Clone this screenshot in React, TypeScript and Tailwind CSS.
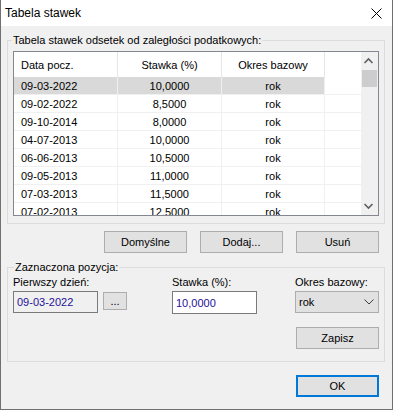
const rows = [
	['09-03-2022', '10,0000'],
	['09-02-2022', '8,5000'],
	['09-10-2014', '8,0000'],
	['04-07-2013', '10,0000'],
	['06-06-2013', '10,5000'],
	['09-05-2013', '11,0000'],
	['07-03-2013', '11,5000'],
	['07-02-2013', '12,5000'],
];

const Button = ({ label, className = '' }: { label: string; className?: string }) => {
	return (
		<div
			className={`w-[83px] h-[22px] flex items-center justify-center border border-[#adadad] bg-[#e1e1e1] ${className}`}
		>
			{label}
		</div>
	);
};

const App = () => {
	return (
		<div className="w-[393px] h-[410px] flex flex-col border-x border-b border-[#707070] bg-[#f0f0f0] font-['Liberation_Sans',Arial,sans-serif] text-[11px] text-black leading-[14px]">
			{/* pasek tytułu */}
			<div className="h-[26px] shrink-0 bg-white flex items-center justify-between pl-[4px] pr-[10px]">
				<div className="text-[12px]">Tabela stawek</div>
				<svg width="11" height="11" viewBox="0 0 11 11">
					<path d="M0.5 0.5 L10.5 10.5 M10.5 0.5 L0.5 10.5" stroke="#000" strokeWidth="1" fill="none" />
				</svg>
			</div>

			{/* tabela */}
			<div className="relative ml-[6px] mt-[14px] w-[378px] h-[184px] border border-[#dcdcdc]">
				<div className="absolute left-[4px] -top-[8px] px-[1px] bg-[#f0f0f0]">
					Tabela stawek odsetek od zaległości podatkowych:
				</div>
				<div className="ml-[5px] mt-[10px] w-[366px] h-[165px] border border-[#828790] bg-white flex overflow-hidden">
					<div className="w-[347px] flex flex-col">
						<div className="h-[25px] shrink-0 flex">
							<div className="w-[104px] border-r border-[#e5e5e5] pl-[7px] flex items-center">Data pocz.</div>
							<div className="w-[104px] border-r border-[#e5e5e5] flex items-center justify-center">
								Stawka (%)
							</div>
							<div className="w-[103px] border-r border-[#e5e5e5] flex items-center justify-center">
								Okres bazowy
							</div>
						</div>
						{rows.map(([date, rate], i) => (
							<div key={date} className="h-[18px] shrink-0 flex border-b border-[#f0f0f0]">
								<div className={`w-[311px] flex ${i === 0 ? 'bg-[#d9d9d9]' : ''}`}>
									<div className="w-[104px] border-r border-[#f0f0f0] pl-[7px] flex items-center">{date}</div>
									<div className="w-[104px] border-r border-[#f0f0f0] flex items-center justify-center">
										{rate}
									</div>
									<div className="w-[103px] border-r border-[#f0f0f0] flex items-center justify-center">
										rok
									</div>
								</div>
							</div>
						))}
					</div>
					<div className="w-[17px] bg-[#f0f0f0] flex flex-col">
						<div className="h-[17px] shrink-0">
							<svg width="17" height="17" viewBox="0 0 17 17">
								<polyline points="3.5,11 7.5,7 11.5,11" stroke="#606060" strokeWidth="1.6" fill="none" />
							</svg>
						</div>
						<div className="mt-[1px] ml-[1px] w-[15px] h-[17px] bg-[#cdcdcd]"></div>
						<div className="flex-1"></div>
						<div className="h-[17px] shrink-0">
							<svg width="17" height="17" viewBox="0 0 17 17">
								<polyline points="3.5,6 7.5,10 11.5,6" stroke="#606060" strokeWidth="1.6" fill="none" />
							</svg>
						</div>
					</div>
				</div>
			</div>

			{/* przyciski tabeli */}
			<div className="mt-[7px] flex justify-end gap-[13px] pr-[13px]">
				<Button label="Domyślne" />
				<Button label="Dodaj..." />
				<Button label="Usuń" />
			</div>

			{/* zaznaczona pozycja */}
			<div className="relative ml-[6px] mt-[14px] w-[378px] h-[95px] border border-[#dcdcdc] flex items-start pt-[7px]">
				<div className="absolute left-[6px] -top-[8px] px-[1px] bg-[#f0f0f0]">Zaznaczona pozycja:</div>
				<div className="ml-[5px] flex flex-col">
					<div>Pierwszy dzień:</div>
					<div className="mt-[2px] flex items-start gap-[5px]">
						<div className="w-[85px] h-[22px] border border-[#7a7a7a] bg-[#f0f0f0] pl-[3px] flex items-center text-[#24109a]">
							09-03-2022
						</div>
						<div className="mt-[1px] w-[24px] h-[18px] border border-[#adadad] bg-[#e1e1e1] flex items-center justify-center">
							...
						</div>
					</div>
				</div>
				<div className="ml-[45px] flex flex-col">
					<div>Stawka (%):</div>
					<div className="mt-[2px] w-[85px] h-[23px] border border-[#7a7a7a] bg-white pl-[3px] flex items-center text-[#24109a]">
						10,0000
					</div>
				</div>
				<div className="ml-[38px] flex flex-col">
					<div>Okres bazowy:</div>
					<div className="mt-[2px] w-[84px] h-[22px] border border-[#adadad] bg-[#e1e1e1] pl-[3px] pr-[4px] flex items-center justify-between">
						<span>rok</span>
						<svg width="10" height="6" viewBox="0 0 10 6">
							<polyline points="0.5,0.5 5,5 9.5,0.5" stroke="#404040" strokeWidth="1" fill="none" />
						</svg>
					</div>
					<Button label="Zapisz" className="mt-[14px] ml-[1px]" />
				</div>
			</div>

			{/* OK */}
			<div className="mt-[13px] flex justify-end pr-[13px]">
				<div className="w-[83px] h-[22px] flex items-center justify-center border-2 border-[#0078d7] bg-[#e1e1e1]">
					OK
				</div>
			</div>
		</div>
	);
};

export default App;
